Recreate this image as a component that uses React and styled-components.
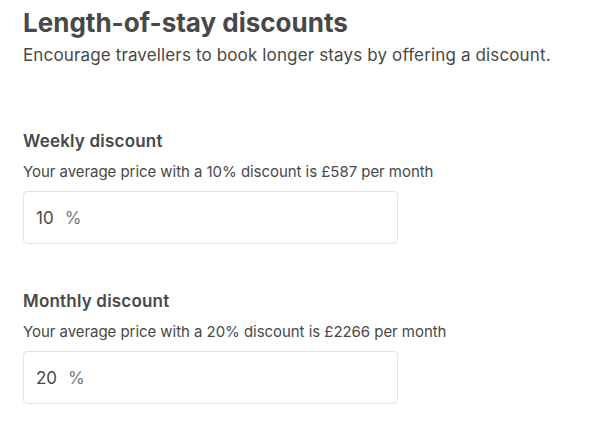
import React from "react";
import styled, { createGlobalStyle } from "styled-components";

const Global = createGlobalStyle`
  html, body { margin: 0; padding: 0; background: #fff; }
  body { font-family: Inter, "Noto Sans", sans-serif; color: #484848; }
`;

const Page = styled.main`
  padding: 7px 23px 0 23px;
  display: flex;
  flex-direction: column;
`;

const Header = styled.header`
  display: flex;
  flex-direction: column;
  gap: 5px;
  margin-bottom: 63px;
`;

const Title = styled.h1`
  margin: 0;
  font-size: 26px;
  line-height: 32px;
  font-weight: 700;
  letter-spacing: 0;
`;

const Subtitle = styled.p`
  margin: 0;
  font-size: 17px;
  line-height: 22px;
  font-weight: 400;
  letter-spacing: 0.14px;
`;

const Section = styled.section`
  display: flex;
  flex-direction: column;
  margin-bottom: 45px;
`;

const Label = styled.h2`
  margin: 0 0 9px 0;
  font-size: 17px;
  line-height: 24px;
  font-weight: 600;
  letter-spacing: 0.2px;
`;

const Hint = styled.p`
  margin: 0 0 9px 0;
  font-size: 15px;
  line-height: 20px;
  letter-spacing: -0.05px;
`;

const Field = styled.div`
  width: 375px;
  height: 53px;
  box-sizing: border-box;
  border: 1px solid #e4e4e4;
  border-radius: 4px;
  display: flex;
  align-items: center;
  padding: 0 12px;
  gap: 11px;
  font-size: 17px;
`;

const Value = styled.span`
  color: #484848;
`;

const Unit = styled.span`
  color: #767676;
`;

const items = [
  { label: "Weekly discount", pct: 10, price: "£587" },
  { label: "Monthly discount", pct: 20, price: "£2266" },
];

export default function App() {
  return (
    <>
      <Global />
      <Page>
        <Header>
          <Title>Length-of-stay discounts</Title>
          <Subtitle>Encourage travellers to book longer stays by offering a discount.</Subtitle>
        </Header>
        {items.map((it) => (
          <Section key={it.label}>
            <Label>{it.label}</Label>
            <Hint>
              Your average price with a {it.pct}% discount is {it.price} per month
            </Hint>
            <Field>
              <Value>{it.pct}</Value>
              <Unit>%</Unit>
            </Field>
          </Section>
        ))}
      </Page>
    </>
  );
}
